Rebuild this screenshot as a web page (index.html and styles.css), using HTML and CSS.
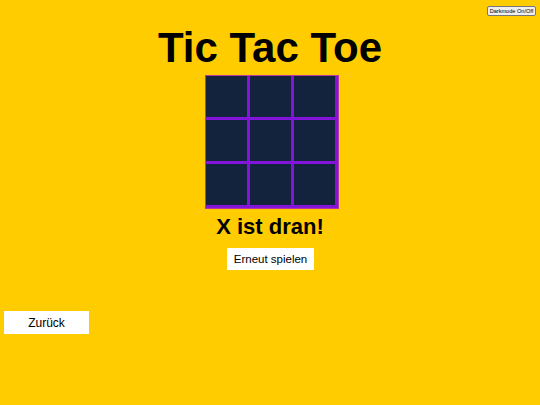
FILE: index.html
```html
<!DOCTYPE html>
<html lang="de">
<head>
<meta charset="utf-8">
<link rel="stylesheet" href="styles.css">
</head>
<body>
<div class="topbar"><button class="dark-btn">Darkmode On/Off</button></div>
<h1 class="title">Tic Tac Toe</h1>
<div class="board-wrap">
  <div class="board">
    <div class="cell"></div><div class="cell"></div><div class="cell"></div>
    <div class="cell"></div><div class="cell"></div><div class="cell"></div>
    <div class="cell"></div><div class="cell"></div><div class="cell"></div>
  </div>
</div>
<p class="status">X ist dran!</p>
<div class="center"><button class="btn restart">Erneut spielen</button></div>
<div class="back-row"><button class="btn back">Zurück</button></div>
</body>
</html>
```
FILE: styles.css
```css
html, body { margin: 0; padding: 0; }
body {
  background: #ffcc00;
  font-family: "Liberation Sans", Arial, sans-serif;
  width: 540px;
  height: 405px;
  overflow: hidden;
}
.topbar {
  display: flex;
  justify-content: flex-end;
  padding: 6px 4px 0 0;
  height: 10px;
}
.dark-btn {
  font-family: "Liberation Sans", Arial, sans-serif;
  font-size: 5.6px;
  line-height: 7px;
  padding: 0 1px;
  width: 49px;
  height: 10px;
  background: #efefef;
  border: 1px solid #767676;
  border-radius: 2px;
  color: #000;
}
.title {
  margin: 8px 0 0;
  text-align: center;
  font-size: 42px;
  line-height: 48px;
  font-weight: bold;
  color: #000;
}
.board-wrap {
  display: flex;
  justify-content: center;
  margin-top: 3px;
  padding-left: 3px;
}
.board {
  display: grid;
  grid-template-columns: repeat(3, 44px);
  grid-template-rows: repeat(3, 44px);
  border: 1px solid #b8389c;
  background: #ffcc00;
}
.cell {
  background: #13233d;
  border-right: 3px solid #8414dc;
  border-bottom: 3px solid #8414dc;
}
.status {
  margin: 5px 0 0;
  text-align: center;
  font-size: 22px;
  line-height: 26px;
  font-weight: bold;
}
.center {
  display: flex;
  justify-content: center;
  margin-top: 8px;
  padding-left: 1px;
}
.btn {
  font-family: "Liberation Sans", Arial, sans-serif;
  background: #fff;
  border: none;
  color: #000;
  padding: 0;
}
.restart {
  width: 87px;
  height: 22px;
  font-size: 11.5px;
}
.back-row {
  margin-top: 41px;
  padding-left: 4px;
}
.back {
  width: 85px;
  height: 23px;
  font-size: 12px;
}
```
